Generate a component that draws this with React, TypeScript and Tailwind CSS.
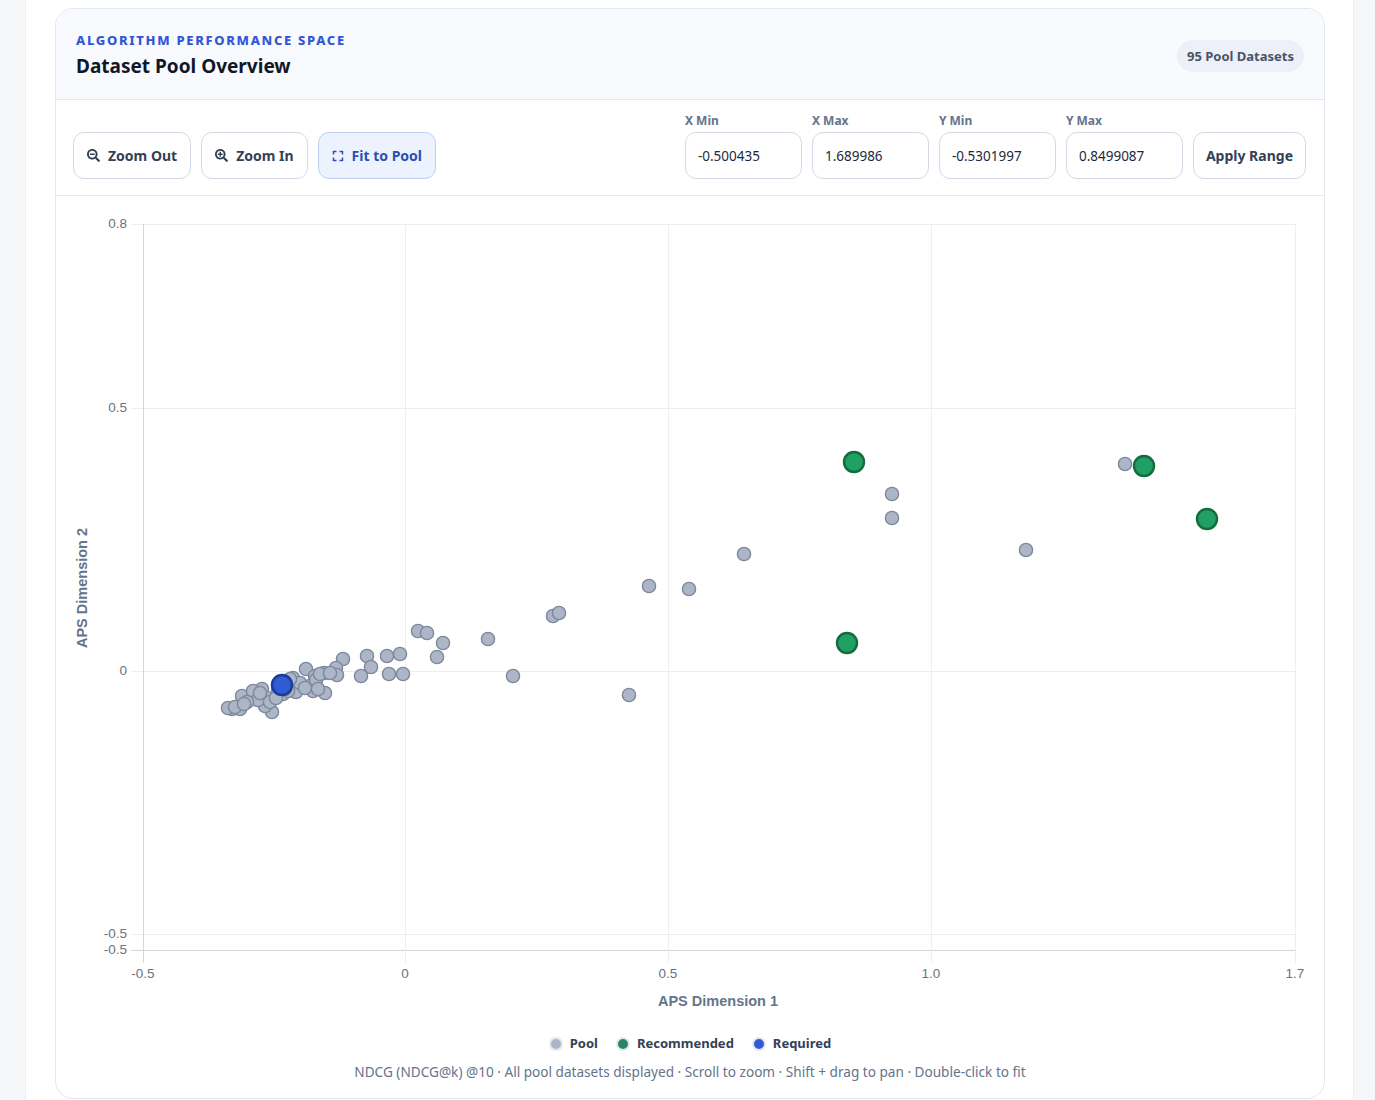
import React from 'react'
import { FaSearchMinus, FaSearchPlus, FaExpand } from 'react-icons/fa'

// plot frame, page coordinates of the reference
const OX = 56
const OY = 195
const PL = 143
const PR = 1295
const PT = 223
const PB = 949

const poolPoints: [number, number][] = [
  [1125, 463], [892, 493], [892, 517], [1026, 549], [744, 553], [649, 585], [689, 588],
  [553, 615], [559, 612], [629, 694], [488, 638], [513, 675], [418, 630], [427, 632],
  [443, 642], [437, 656], [343, 658], [367, 655], [371, 666], [387, 655], [400, 653],
  [389, 673], [403, 673], [361, 675], [336, 667], [337, 674], [324, 672], [306, 668],
  [315, 675], [325, 692], [310, 685], [296, 691], [293, 677], [272, 711], [252, 697],
  [242, 695], [232, 708], [228, 707], [240, 708], [262, 688], [267, 697], [265, 705],
  [253, 690], [313, 690], [283, 693], [316, 679], [320, 673], [300, 682], [288, 690],
  [278, 689], [258, 699], [247, 701], [235, 706], [270, 701], [305, 687], [290, 678],
  [276, 697], [260, 692], [244, 703], [318, 688], [330, 672], [285, 688],
]

const recommended: [number, number][] = [
  [854, 461], [1144, 465], [1207, 518], [847, 642],
]

const required: [number, number] = [282, 684]

const yTicks = [
  { y: 223, label: '0.8' },
  { y: 407, label: '0.5' },
  { y: 670, label: '0' },
  { y: 933, label: '-0.5' },
  { y: 949, label: '-0.5' },
]

const xTicks = [
  { x: 143, label: '-0.5' },
  { x: 405, label: '0' },
  { x: 668, label: '0.5' },
  { x: 931, label: '1.0' },
  { x: 1295, label: '1.7' },
]

const ranges = [
  { label: 'X Min', value: '-0.500435' },
  { label: 'X Max', value: '1.689986' },
  { label: 'Y Min', value: '-0.5301997' },
  { label: 'Y Max', value: '0.8499087' },
]

const ScatterChart = () => {
  const sx = (x: number) => x - OX
  const sy = (y: number) => y - OY
  return (
    <svg width={1268} height={838} className="block" style={{ fontFamily: '"Liberation Sans", Arial, sans-serif' }}>
      {/* grid */}
      {yTicks.map((t, i) => (
        <line
          key={`gy-${i}`}
          x1={sx(131)}
          x2={sx(PR)}
          y1={sy(t.y) + 0.5}
          y2={sy(t.y) + 0.5}
          stroke={t.y === PB ? '#d4d7dd' : '#eceef2'}
          strokeWidth={1}
        />
      ))}
      {xTicks.map((t, i) => (
        <line
          key={`gx-${i}`}
          x1={sx(t.x) + 0.5}
          x2={sx(t.x) + 0.5}
          y1={sy(PT)}
          y2={sy(962)}
          stroke={t.x === PL ? '#d4d7dd' : '#eceef2'}
          strokeWidth={1}
        />
      ))}
      {yTicks.map((t, i) => (
        <text key={`ty-${i}`} x={sx(127)} y={sy(t.y) + 4} textAnchor="end" fontSize={13.5} fill="#6b7280">
          {t.label}
        </text>
      ))}
      {xTicks.map((t, i) => (
        <text key={`tx-${i}`} x={sx(t.x)} y={sy(977)} textAnchor="middle" fontSize={13.5} fill="#6b7280">
          {t.label}
        </text>
      ))}
      <text x={sx(718)} y={sy(1005)} textAnchor="middle" fontSize={14.5} fontWeight={700} fill="#64748b">
        APS Dimension 1
      </text>
      <text
        x={0}
        y={0}
        transform={`translate(${sx(87)} ${sy(587)}) rotate(-90)`}
        textAnchor="middle"
        fontSize={14.5}
        fontWeight={700}
        fill="#64748b"
      >
        APS Dimension 2
      </text>

      {poolPoints.map(([x, y], i) => (
        <circle key={`p-${i}`} cx={sx(x)} cy={sy(y)} r={6.6} fill="#adb6c6" stroke="#7d889c" strokeWidth={1.4} />
      ))}
      {recommended.map(([x, y], i) => (
        <circle key={`r-${i}`} cx={sx(x)} cy={sy(y)} r={10} fill="#21a065" stroke="#136c3b" strokeWidth={2.4} />
      ))}
      <circle cx={sx(required[0])} cy={sy(required[1])} r={10} fill="#2f5bd6" stroke="#1d3a96" strokeWidth={2.4} />
    </svg>
  )
}

const ToolButton = ({
  icon,
  label,
  active,
}: {
  icon: React.ReactNode
  label: string
  active?: boolean
}) => (
  <button
    className={
      active
        ? 'flex h-[47px] items-center gap-[8px] rounded-[11px] border border-[#bccff2] bg-[#edf3fe] px-[13px] text-[14px] font-bold text-[#2a4fb6]'
        : 'flex h-[47px] items-center gap-[8px] rounded-[11px] border border-[#d3dae6] bg-white px-[13px] text-[14px] font-bold text-[#334155]'
    }
    type="button"
  >
    {icon}
    <span>{label}</span>
  </button>
)

export default function App() {
  return (
    <div className="min-h-screen bg-[#f6f7f9]" style={{ fontFamily: '"Noto Sans", Lato, sans-serif' }}>
      <div className="ml-[25px] w-[1329px] border-x border-[#eceff3] bg-white pt-2 pb-4">
        <div className="ml-[29px] w-[1270px] overflow-hidden rounded-[18px] border border-[#e1e7ef] bg-white">
          {/* header */}
          <div className="flex items-center justify-between border-b border-[#e2e8f0] bg-[#f8fafd] px-5 pt-[22px] pb-[19px]">
            <div>
              <div className="text-[13px] leading-[18px] font-extrabold tracking-[0.13em] text-[#3157d4] uppercase">
                Algorithm Performance Space
              </div>
              <h2 className="mt-[3px] text-[19px] leading-[28px] font-bold text-[#0f172a]">Dataset Pool Overview</h2>
            </div>
            <span className="rounded-full bg-[#edf1f7] px-[10px] py-[7px] text-[13px] leading-[18px] font-bold text-[#475569]">
              95 Pool Datasets
            </span>
          </div>

          {/* toolbar */}
          <div className="flex items-end justify-between border-b border-[#e2e8f0] pt-[13px] pr-[18px] pb-4 pl-[17px]">
            <div className="flex gap-[10px]">
              <ToolButton icon={<FaSearchMinus className="size-[13px]" />} label="Zoom Out" />
              <ToolButton icon={<FaSearchPlus className="size-[13px]" />} label="Zoom In" />
              <ToolButton icon={<FaExpand className="size-[12px]" />} label="Fit to Pool" active />
            </div>
            <div className="flex items-end gap-[10px]">
              {ranges.map((r) => (
                <label className="flex flex-col gap-[3px]" key={r.label}>
                  <span className="text-[12px] leading-4 font-bold text-[#64748b]">{r.label}</span>
                  <input
                    className="h-[47px] w-[117px] rounded-[11px] border border-[#d3dae6] bg-white px-[12px] text-[13.5px] text-[#1e293b] outline-none"
                    defaultValue={r.value}
                    type="text"
                  />
                </label>
              ))}
              <button
                className="h-[47px] rounded-[11px] border border-[#d3dae6] bg-white px-[12px] text-[14px] font-bold text-[#334155]"
                type="button"
              >
                Apply Range
              </button>
            </div>
          </div>

          {/* chart */}
          <ScatterChart />

          <div className="flex h-5 items-center justify-center gap-[18px] text-[13px] font-bold text-[#334155]">
            <span className="flex items-center gap-[7px]">
              <span className="size-[14px] rounded-full border-2 border-[#e2e8f0] bg-[#adb6c6]" />
              Pool
            </span>
            <span className="flex items-center gap-[7px]">
              <span className="size-[14px] rounded-full border-2 border-[#e2e8f0] bg-[#2b8466]" />
              Recommended
            </span>
            <span className="flex items-center gap-[7px]">
              <span className="size-[14px] rounded-full border-2 border-[#e2e8f0] bg-[#2f5bd6]" />
              Required
            </span>
          </div>
          <p className="mt-2 pb-4 text-center text-[13.6px] leading-5 text-[#64748b]">
            NDCG (NDCG@k) @10 · All pool datasets displayed · Scroll to zoom · Shift + drag to pan · Double-click to fit
          </p>
        </div>
      </div>
    </div>
  )
}
